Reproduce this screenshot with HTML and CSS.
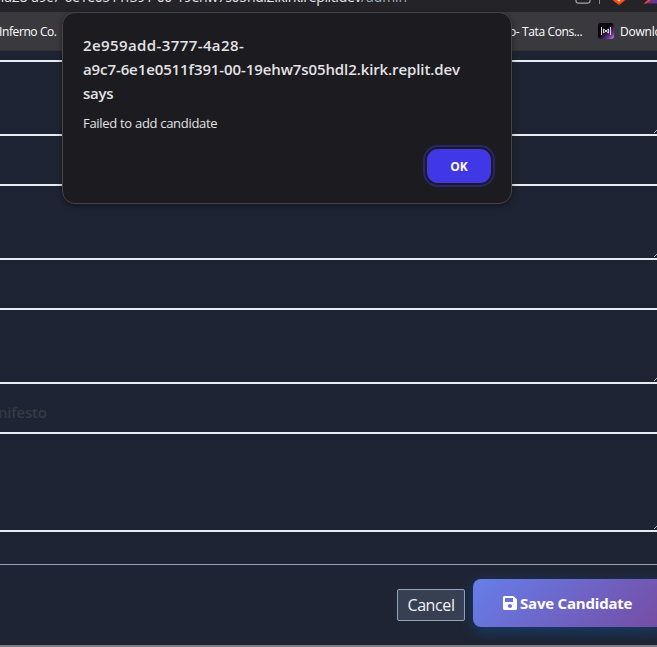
FILE: index.html
```html
<!DOCTYPE html>
<html lang="en">
<head>
<meta charset="utf-8">
<title>Admin</title>
<link rel="stylesheet" href="styles.css">
</head>
<body>
<header class="toolbar">
  <div class="url"><span class="host">4a28-a9c7-6e1e0511f391-00-19ehw7s05hdl2.kirk.replit.dev</span><span class="path">/admin</span></div>
  <svg class="tools" width="92" height="12" viewBox="0 0 92 12">
    <path d="M11 -5V1Q11 3.200 13.500 3.200H22.500Q25 3.200 25 1V-5" fill="none" stroke="#a3a3a8" stroke-width="1.200"/>
    <path d="M34.500 0V4" stroke="#85858a"/>
    <path d="M47 -4H61L59.500 1L54 5L48.500 1Z" fill="#fb4a0a"/>
    <path d="M52 0H56L54 1.500Z" fill="#fff"/>
    <path d="M83 0H92V3.500H79Z" fill="#683294"/>
    <path d="M83 0H86L81 3.500H79Z" fill="#ff4724"/>
  </svg>
</header>
<nav class="bookmarks">
  <span class="mark first">Inferno Co.</span>
  <span class="mark second">o- Tata Cons...</span>
  <svg class="favicon" width="16" height="16" viewBox="0 0 16 16">
    <defs><linearGradient id="fav" x1="0" y1="0" x2="1" y2="1"><stop offset=".45" stop-color="#09070d"/><stop offset=".8" stop-color="#71369a"/><stop offset="1" stop-color="#e58ef0"/></linearGradient></defs>
    <rect width="16" height="16" rx="3" fill="url(#fav)"/>
    <path d="M3.500 4V12M5.500 6V10M8 7V9M10.500 6V10M12.500 4V12M5.500 6L8 8L10.500 6M5.500 10L8 8L10.500 10" fill="none" stroke="#d8d5df"/>
  </svg>
  <span class="mark">Downloads</span>
</nav>
<main class="form">
  <div class="area"></div>
  <div class="label"></div>
  <div class="area"></div>
  <div class="label"></div>
  <div class="area"></div>
  <div class="label">nifesto</div>
  <div class="area tall"></div>
  <footer class="actions">
    <button class="cancel">Cancel</button>
    <button class="save">
      <svg width="16" height="16" viewBox="0 0 448 512"><path fill="#fff" d="M433.941 129.941l-83.882-83.882A48 48 0 0 0 316.118 32H48C21.490 32 0 53.490 0 80v352c0 26.510 21.490 48 48 48h352c26.510 0 48-21.490 48-48V163.882a48 48 0 0 0-14.059-33.941zM224 416c-35.346 0-64-28.654-64-64s28.654-64 64-64 64 28.654 64 64-28.654 64-64 64zm96-304.520V212c0 6.627-5.373 12-12 12H76c-6.627 0-12-5.373-12-12V108c0-6.627 5.373-12 12-12h228.520c3.183 0 6.235 1.264 8.485 3.515l3.480 3.480A11.996 11.996 0 0 1 320 111.480z"/></svg>
      <span>Save Candidate</span>
    </button>
  </footer>
</main>
<section class="dialog" role="alertdialog">
  <h1><span class="lead">2e959add-3777-4a28-</span><br>a9c7-6e1e0511f391-00-19ehw7s05hdl2.kirk.replit.dev<br><span class="says">says</span></h1>
  <p>Failed to add candidate</p>
  <button class="ok">OK</button>
</section>
</body>
</html>
```
FILE: styles.css
```css
* { box-sizing: border-box; }
body {
  margin: 0;
  width: 657px;
  height: 647px;
  overflow: hidden;
  background: #1e2433;
  color: #fff;
  font-family: "Open Sans", "Noto Sans", sans-serif;
}
button { font-family: inherit; }
.toolbar {
  display: flex;
  justify-content: space-between;
  height: 12px;
  background: #242328;
  overflow: hidden;
}
.url {
  width: 407px;
  display: flex;
  justify-content: flex-end;
  margin-top: -12px;
  font-size: 14px;
  line-height: 18px;
  letter-spacing: -.36px;
  white-space: nowrap;
}
.host { color: #e6e6ea; }
.path { color: #9fb0bf; letter-spacing: -.1px; }
.bookmarks {
  display: flex;
  align-items: center;
  height: 39px;
  background: #3a393e;
  border-bottom: 1px solid #323136;
  font-size: 12px;
  letter-spacing: -.2px;
  white-space: nowrap;
  overflow: hidden;
}
.mark { flex: none; }
.first { width: 512px; text-indent: -1px; letter-spacing: -.4px; }
.second { width: 86px; text-indent: -3px; letter-spacing: -.38px; }
.favicon { margin-right: 6px; flex: none; }
.form { padding-top: 9px; }
.area {
  position: relative;
  height: 76px;
  border: solid #e9ecef;
  border-width: 2px 0;
}
.area::after {
  content: "";
  position: absolute;
  right: 0;
  bottom: 1px;
  width: 3px;
  height: 4px;
  background: linear-gradient(135deg, transparent 45%, #b8bac0 46% 62%, transparent 63%);
}
.tall { height: 100px; }
.label {
  height: 48px;
  font-size: 15px;
  font-weight: 600;
  letter-spacing: -.2px;
  line-height: 56px;
  text-indent: -2px;
  color: #343a40;
}
.actions {
  display: flex;
  align-items: flex-start;
  height: 83px;
  margin-top: 32px;
  padding: 14px 0 0 397px;
  gap: 8px;
  border-top: 1px solid #94a3b8;
  border-bottom: 2px solid #7b7e87;
}
.cancel {
  flex: none;
  width: 68px;
  height: 32px;
  margin-top: 10px;
  padding: 0;
  background: #374053;
  border: 1px solid #94a3b8;
  border-radius: 2px;
  color: #f1f3f6;
  font-size: 16px;
  letter-spacing: -.4px;
}
.save {
  flex: none;
  display: flex;
  align-items: center;
  gap: 2px;
  width: 192px;
  height: 48px;
  padding: 0 0 0 29px;
  border: 0;
  border-radius: 8px;
  background: linear-gradient(135deg, #667eea, #764ba2);
  box-shadow: 0 4px 15px rgba(0, 123, 255, .3);
  color: #fff;
  font-size: 15px;
  font-weight: 700;
  letter-spacing: -.2px;
  white-space: nowrap;
}
.dialog {
  position: absolute;
  left: 62px;
  top: 12px;
  width: 450px;
  height: 192px;
  padding: 20px;
  background: #1c1b1f;
  border: 1px solid #454449;
  border-radius: 13px;
  box-shadow: 0 2px 6px rgba(0, 0, 0, .4);
  color: #e3e2e6;
}
h1 { margin: 0; font-size: 15px; line-height: 24px; font-weight: 650; letter-spacing: -.1px; white-space: nowrap; }
.lead { letter-spacing: .4px; }
.says { letter-spacing: -.3px; }
.dialog p { margin: 8px 0 0; font-size: 13px; line-height: 20px; letter-spacing: -.3px; }
.ok {
  display: block;
  width: 64px;
  height: 34px;
  margin: 16px 0 0 auto;
  padding: 0;
  border: 0;
  border-radius: 11px;
  background: #4038e6;
  box-shadow: 0 0 0 2px #1c1b1f, 0 0 0 4px #29256f;
  color: #fff;
  font-size: 12px;
  font-weight: 700;
}
```
